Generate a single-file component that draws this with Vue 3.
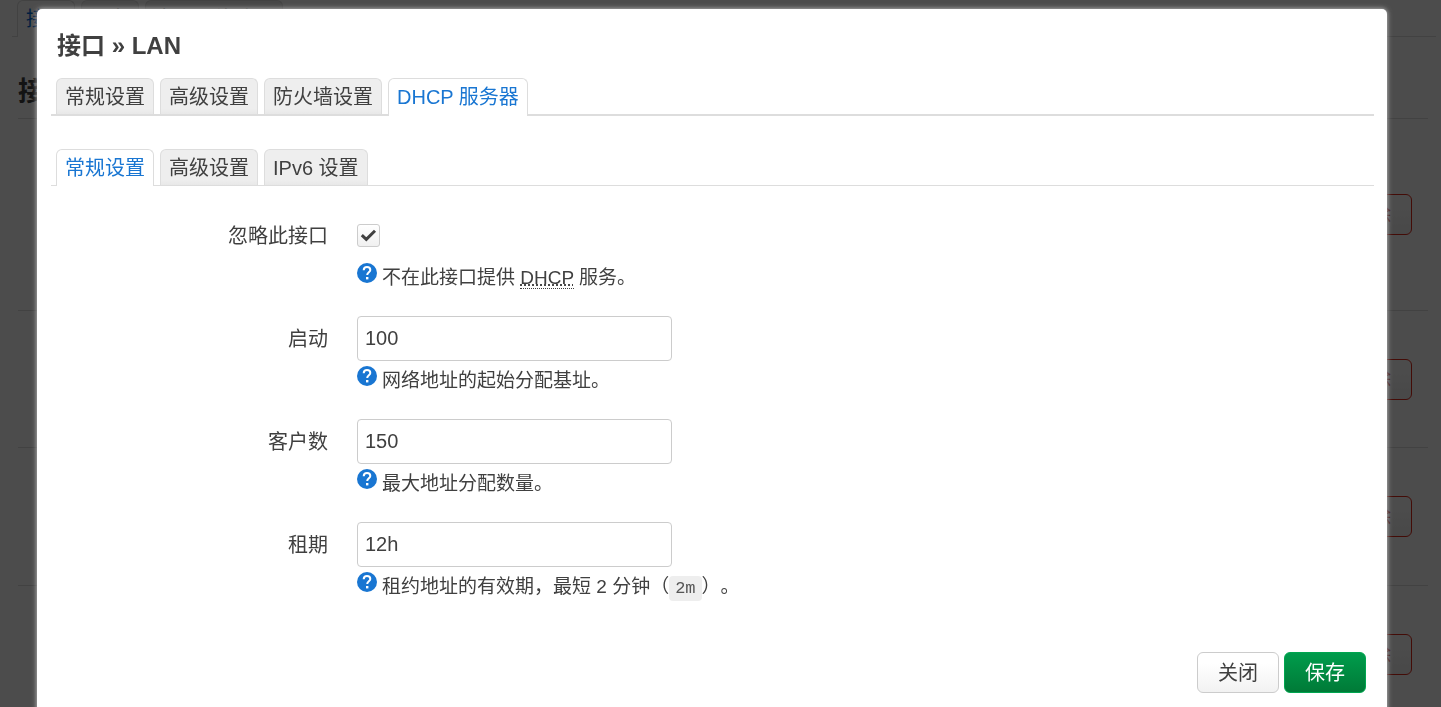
<script setup>
import { ref, reactive } from 'vue'

const pageTabs = ['接口', '设备', '全局网络选项']
const mainTabs = ['常规设置', '高级设置', '防火墙设置', 'DHCP 服务器']
const subTabs = ['常规设置', '高级设置', 'IPv6 设置']
const interfaces = ['lan', 'wan', 'wan6', 'vpn']

const mainActive = ref(3)
const subActive = ref(0)
const ignore = ref(true)
const fields = reactive([
  { id: 'start', label: '启动', value: '100', help: '网络地址的起始分配基址。' },
  { id: 'limit', label: '客户数', value: '150', help: '最大地址分配数量。' },
  { id: 'lease', label: '租期', value: '12h', help: '租约地址的有效期，最短 2 分钟（', code: '2m', tail: '）。' },
])
</script>

<template>
  <div class="page">
    <main class="content">
      <nav class="tabs page-tabs">
        <a v-for="(t, i) in pageTabs" :key="t" href="#" class="tab" :class="{ active: i === 0 }">{{ t }}</a>
      </nav>
      <h2 class="page-title">接口</h2>
      <div v-for="name in interfaces" :key="name" class="iface">
        <button type="button" class="btn remove">删除</button>
      </div>
    </main>

    <div class="overlay">
      <section class="modal" role="dialog" aria-labelledby="dialog-title">
        <h4 id="dialog-title" class="title">接口 » LAN</h4>
        <nav class="tabs main-tabs">
          <a v-for="(t, i) in mainTabs" :key="t" href="#" class="tab" :class="{ active: i === mainActive }" @click.prevent="mainActive = i">{{ t }}</a>
        </nav>
        <nav class="tabs sub-tabs">
          <a v-for="(t, i) in subTabs" :key="t" href="#" class="tab" :class="{ active: i === subActive }" @click.prevent="subActive = i">{{ t }}</a>
        </nav>

        <form class="form" @submit.prevent>
          <div class="row">
            <label class="label" for="ignore">忽略此接口</label>
            <div class="field">
              <div class="check-line">
                <span class="check">
                  <input id="ignore" v-model="ignore" type="checkbox" />
                  <svg v-if="ignore" viewBox="0 0 23 23" aria-hidden="true"><path d="M4.800 11.200 9.300 15.400 18 6.800" /></svg>
                </span>
              </div>
              <div class="help">
                <svg class="help-icon" viewBox="0 0 20 20" aria-hidden="true">
                  <circle cx="10" cy="10" r="10" />
                  <path d="M6.700 7.200C6.800 5 8.200 4 10 4s3.300 1.100 3.300 2.900c0 2.300-3.100 2.500-3.100 5.200" />
                  <rect x="9" y="14" width="2.400" height="2.400" />
                </svg>
                <span>不在此接口提供 <abbr title="动态主机配置协议">DHCP</abbr> 服务。</span>
              </div>
            </div>
          </div>

          <div v-for="f in fields" :key="f.id" class="row">
            <label class="label" :for="f.id">{{ f.label }}</label>
            <div class="field">
              <input :id="f.id" v-model="f.value" class="text" type="text" />
              <div class="help">
                <svg class="help-icon" viewBox="0 0 20 20" aria-hidden="true">
                  <circle cx="10" cy="10" r="10" />
                  <path d="M6.700 7.200C6.800 5 8.200 4 10 4s3.300 1.100 3.300 2.900c0 2.300-3.100 2.500-3.100 5.200" />
                  <rect x="9" y="14" width="2.400" height="2.400" />
                </svg>
                <span>{{ f.help }}<code v-if="f.code">{{ f.code }}</code>{{ f.tail }}</span>
              </div>
            </div>
          </div>

          <div class="actions">
            <button type="button" class="btn">关闭</button>
            <button type="submit" class="btn save">保存</button>
          </div>
        </form>
      </section>
    </div>
  </div>
</template>

<style>
body {
  background: #fff;
}
</style>

<style scoped>
.page {
  height: 100vh;
  overflow: hidden;
  color: #404040;
  font-family: "Liberation Sans", "Noto Sans CJK SC", sans-serif;
  font-size: 20px;
  line-height: 28px;
}
.page *,
.page *::before {
  box-sizing: border-box;
}
.content {
  padding: 0 13px 0 18px;
}
.tabs {
  display: flex;
  gap: 6px;
  padding-left: 5px;
  border-bottom: 1px solid #ddd;
}
.tab {
  height: 36px;
  padding: 0 8px;
  border: 1px solid #ddd;
  border-bottom: 0;
  border-radius: 6px 6px 0 0;
  background: linear-gradient(#eee 85%, #e8e8e8);
  color: #404040;
  line-height: 37px;
  text-decoration: none;
  white-space: nowrap;
}
.tab.active {
  height: 37px;
  margin-bottom: -1px;
  background: #fff;
  color: #0069d6;
}
.page-tabs {
  margin: 0 -8px 0 -6px;
}
.page-title {
  margin: 0;
  padding: 42px 0 12px;
  border-bottom: 1px solid #ddd;
  font-size: 27px;
  line-height: 27px;
}
.iface {
  display: flex;
  align-items: center;
  justify-content: flex-end;
  height: 138px;
  padding-right: 16px;
  border-bottom: 1px solid #ddd;
}
.iface:nth-of-type(1) {
  height: 192px;
}
.iface:nth-of-type(2) {
  height: 137px;
}
.overlay {
  position: fixed;
  inset: 0;
  overflow: hidden;
  padding: 9px 54px 0 37px;
  background: rgba(0, 0, 0, 0.7);
}
.modal {
  min-height: 100vh;
  padding: 14px 13px;
  border-radius: 5px;
  background: #fff;
  box-shadow: 0 0 5px #ccc;
}
.title {
  margin: 0 6px 10px 7px;
  font-size: 24px;
  line-height: 45px;
}
.main-tabs {
  margin-bottom: 33px;
  border-bottom-width: 2px;
}
.main-tabs .tab.active {
  height: 38px;
  margin-bottom: -2px;
}
.modal .tabs {
  margin-left: 1px;
}
.modal .tab.active {
  color: #1976d2;
}
.form {
  padding: 27px 8px 0 0;
}
.row {
  display: grid;
  grid-template-columns: 278px 1fr;
  column-gap: 29px;
  min-height: 103px;
}
.label {
  text-align: right;
  line-height: 46px;
}
.field {
  min-width: 0;
}
.check-line {
  display: flex;
  align-items: center;
  height: 45px;
}
.check {
  display: grid;
  width: 23px;
  height: 23px;
}
.check input,
.check svg {
  grid-area: 1 / 1;
  width: 23px;
  height: 23px;
  margin: 0;
}
.check input {
  appearance: none;
  border: 1px solid #ccc;
  border-radius: 3px;
  background: linear-gradient(#fff, #f0f0f0);
}
.check svg {
  fill: none;
  stroke: #404040;
  stroke-width: 3;
  pointer-events: none;
}
.text {
  display: block;
  width: 315px;
  max-width: 100%;
  height: 45px;
  padding: 0 7px;
  border: 1px solid #ccc;
  border-radius: 4px;
  background: #fff;
  color: #404040;
  font: inherit;
}
.help {
  display: flex;
  align-items: flex-start;
  gap: 5px;
  padding-top: 5px;
  font-size: 19px;
  line-height: 30px;
  text-spacing-trim: space-all;
}
.help-icon {
  flex: none;
  width: 20px;
  height: 20px;
  fill: #1976d2;
}
.help-icon path {
  fill: none;
  stroke: #fff;
  stroke-width: 2;
}
.help-icon rect {
  fill: #fff;
}
abbr {
  border-bottom: 1px dotted #404040;
  text-decoration: underline dotted;
}
code {
  padding: 3px 6px;
  border-radius: 4px;
  background: #eee;
  color: #555;
  font-family: "Liberation Mono", monospace;
  font-size: 17px;
}
.actions {
  display: flex;
  justify-content: flex-end;
  gap: 5px;
  padding-top: 27px;
}
.btn {
  height: 41px;
  padding: 0 20px;
  border: 1px solid #ccc;
  border-radius: 6px;
  background: linear-gradient(#fff 25%, #f2f2f2);
  color: #404040;
  font: inherit;
  line-height: 38px;
}
.save {
  border-color: #00a650;
  background: linear-gradient(#009c4c, #007a37);
  color: #fff;
}
.remove {
  border-color: #e02a1a;
  color: #c43c35;
}
</style>
